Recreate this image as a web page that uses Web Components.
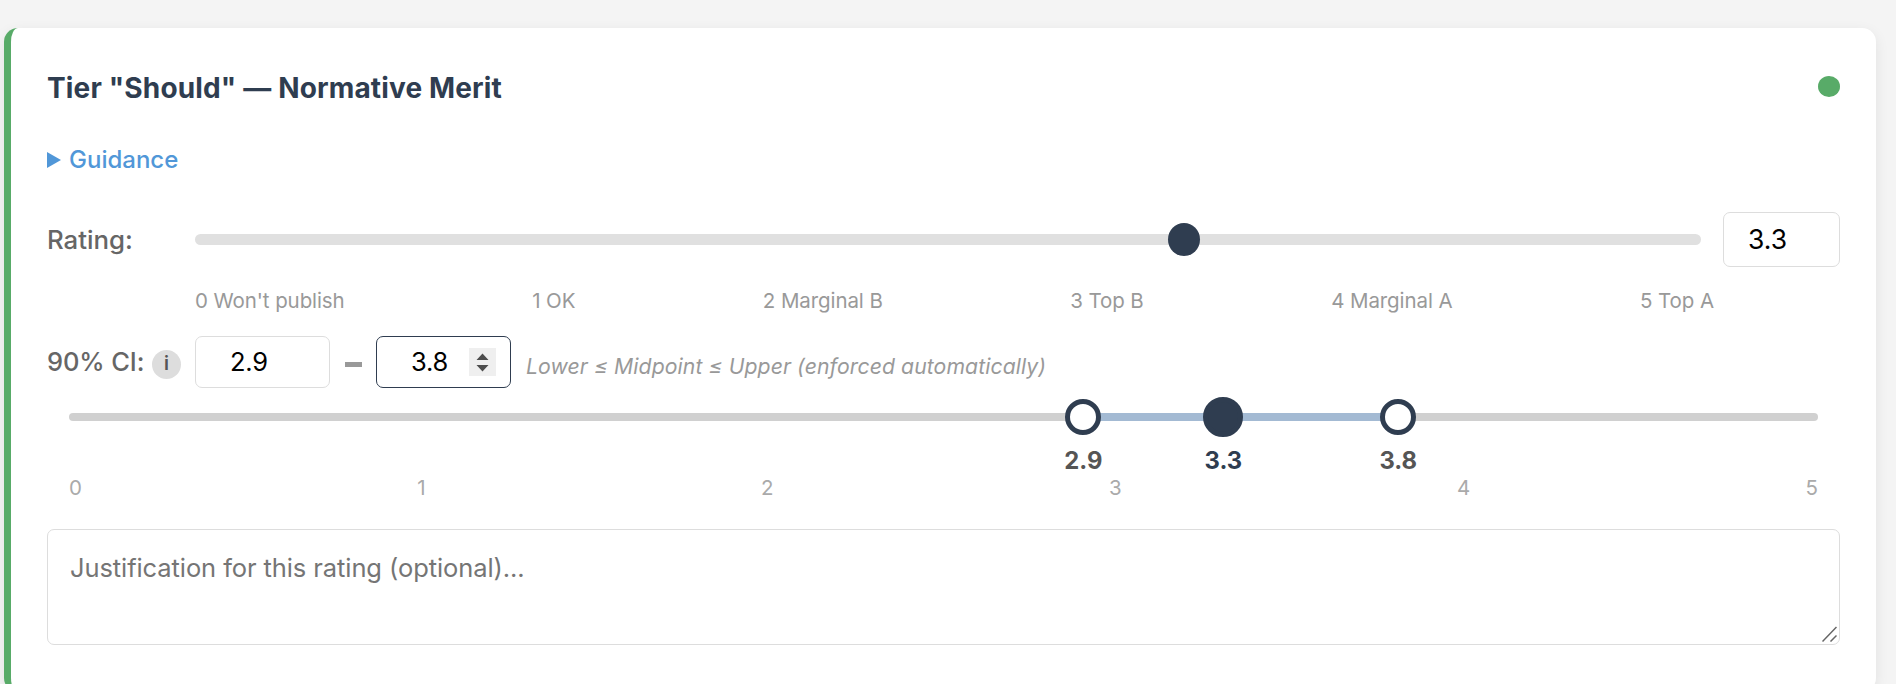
<!DOCTYPE html>
<html lang="en">
<head>
<meta charset="utf-8">
<title>Tier rating</title>
<style>
body {
  margin: 0;
  height: 684px;
  overflow: hidden;
  background: #f4f4f4;
  font-family: Inter, "Liberation Sans", sans-serif;
}
</style>
</head>
<body>

<rating-card heading='Tier "Should" — Normative Merit'>
  <guidance-toggle>Guidance</guidance-toggle>
  <rating-slider label="Rating:" value="3.3"></rating-slider>
  <scale-labels>
    <span>0 Won't publish</span>
    <span>1 OK</span>
    <span>2 Marginal B</span>
    <span>3 Top B</span>
    <span>4 Marginal A</span>
    <span>5 Top A</span>
  </scale-labels>
  <ci-row lower="2.9" upper="3.8">Lower ≤ Midpoint ≤ Upper (enforced automatically)</ci-row>
  <ci-range lower="2.9" mid="3.3" upper="3.8"></ci-range>
  <note-box>Justification for this rating (optional)...</note-box>
</rating-card>

<script>
class RatingCard extends HTMLElement {
  constructor() {
    super();
    this.attachShadow({ mode: "open" });
    this.shadowRoot.innerHTML = `
<style>
:host {
  display: block;
  box-sizing: border-box;
  margin: 28px 20px 0 4px;
  padding: 44px 36px 47px;
  border-left: 7px solid #58ab68;
  border-radius: 14px;
  background: #fff;
  box-shadow: 0 4px 14px rgba(0, 0, 0, 0.08);
}
header {
  display: flex;
  justify-content: space-between;
  height: 32px;
  margin-bottom: 41px;
}
h3 {
  margin: 0;
  font-size: 28px;
  line-height: 32px;
  font-weight: 700;
  letter-spacing: 0.15px;
  color: #2f3d50;
  white-space: nowrap;
}
.dot {
  width: 22px;
  height: 21px;
  margin-top: 4px;
  border-radius: 50%;
  background: #58ab68;
}
</style>
<header><h3></h3><span class="dot"></span></header>
<slot></slot>
`;
    this.shadowRoot.querySelector("h3").textContent = this.getAttribute("heading");
  }
}

class GuidanceToggle extends HTMLElement {
  constructor() {
    super();
    this.attachShadow({ mode: "open" });
    this.shadowRoot.innerHTML = `
<style>
:host {
  display: flex;
  align-items: center;
  gap: 8px;
  height: 28px;
  margin-bottom: 39px;
  font-size: 24px;
  line-height: 28px;
  font-weight: 500;
  color: #5197d8;
  cursor: pointer;
}
svg { display: block; margin-top: 2px; }
span { margin-top: 1px; }
</style>
<svg width="14" height="16" viewBox="0 0 14 16"><path d="M0 0L14 8L0 16Z" fill="#5197d8"/></svg>
<span><slot></slot></span>
`;
  }
}

class RatingSlider extends HTMLElement {
  constructor() {
    super();
    this.attachShadow({ mode: "open" });
    this.shadowRoot.innerHTML = `
<style>
:host {
  display: flex;
  align-items: center;
  height: 55px;
  margin-bottom: 20px;
}
.label {
  width: 148px;
  font-size: 25.8px;
  line-height: 30px;
  font-weight: 500;
  color: #666;
}
.track {
  position: relative;
  flex: 1;
  height: 11px;
  margin-right: 22px;
  border-radius: 6px;
  background: #e0e0e0;
}
.thumb {
  position: absolute;
  top: -11px;
  width: 32px;
  height: 33px;
  border-radius: 50%;
  background: #2f3d50;
}
.number {
  box-sizing: border-box;
  width: 117px;
  height: 55px;
  padding-left: 24px;
  border: 1px solid #ddd;
  border-radius: 7px;
  font-size: 26.5px;
  line-height: 53px;
  color: #000;
}
</style>
<span class="label"></span>
<div class="track"><span class="thumb"></span></div>
<div class="number"></div>
`;
    const value = this.getAttribute("value");
    this.shadowRoot.querySelector(".label").textContent = this.getAttribute("label");
    this.shadowRoot.querySelector(".number").textContent = value;
    // the thumb stays inside the track at both ends
    this.shadowRoot.querySelector(".thumb").style.left = `calc((100% - 32px) * ${value / 5})`;
  }
}

class ScaleLabels extends HTMLElement {
  constructor() {
    super();
    this.attachShadow({ mode: "open" });
    this.shadowRoot.innerHTML = `
<style>
:host {
  display: flex;
  justify-content: space-between;
  height: 28px;
  margin: 0 126px 21px 148px;
  font-size: 20.5px;
  line-height: 28px;
  letter-spacing: -0.09px;
  color: #999;
  white-space: nowrap;
}
</style>
<slot></slot>
`;
  }
}

class CiRow extends HTMLElement {
  constructor() {
    super();
    this.attachShadow({ mode: "open" });
    this.shadowRoot.innerHTML = `
<style>
:host {
  display: flex;
  align-items: center;
  height: 52px;
  margin-bottom: 9px;
  white-space: nowrap;
}
.label {
  display: flex;
  align-items: center;
  justify-content: space-between;
  width: 134px;
  margin-right: 14px;
  font-size: 25.5px;
  line-height: 30px;
  font-weight: 500;
  letter-spacing: -0.1px;
  color: #666;
}
.info {
  width: 29px;
  height: 29px;
  margin-top: 5px;
  border-radius: 50%;
  background: #ddd;
  font-size: 19px;
  line-height: 27px;
  font-weight: 600;
  text-align: center;
  color: #555;
}
.number {
  box-sizing: border-box;
  display: flex;
  align-items: center;
  justify-content: space-between;
  width: 135px;
  height: 52px;
  padding: 0 14px 0 34px;
  border: 1px solid #ddd;
  border-radius: 7px;
  font-size: 25.5px;
  line-height: 50px;
  letter-spacing: -0.2px;
  color: #000;
}
.number.focused { border-color: #2f3d50; }
.dash {
  width: 17px;
  margin: 5px 14px 0 15px;
  height: 5px;
  background: #999;
}
.hint {
  margin: 7px 0 0 15px;
  font-size: 21.2px;
  line-height: 28px;
  font-style: italic;
  letter-spacing: 0.09px;
  color: #999;
}
</style>
<div class="label"><span>90% CI:</span><span class="info">i</span></div>
<div class="number"><span id="lower"></span></div>
<span class="dash"></span>
<div class="number focused"><span id="upper"></span>
  <svg width="27" height="28" viewBox="0 0 27 28">
    <rect width="27" height="28" fill="#efefef"/>
    <path d="M7.5 12L13.5 5.5L19.5 12ZM7.5 17L13.5 23.5L19.5 17Z" fill="#4d4d4d"/>
  </svg>
</div>
<span class="hint"><slot></slot></span>
`;
    this.shadowRoot.querySelector("#lower").textContent = this.getAttribute("lower");
    this.shadowRoot.querySelector("#upper").textContent = this.getAttribute("upper");
  }
}

class CiRange extends HTMLElement {
  constructor() {
    super();
    this.attachShadow({ mode: "open" });
    this.shadowRoot.innerHTML = `
<style>
:host {
  display: block;
  margin: 0 22px 28px;
}
.range {
  position: relative;
  height: 40px;
  padding: 16px 0;
  margin-bottom: 37px;
  box-sizing: border-box;
}
.track {
  height: 8px;
  border-radius: 4px;
  background: #d0d0d0;
}
.fill {
  position: absolute;
  top: 16px;
  height: 8px;
  background: #a3bad3;
}
.handle {
  position: absolute;
  top: 20px;
  box-sizing: border-box;
  width: 36px;
  height: 36px;
  border: 5px solid #2f3d50;
  border-radius: 50%;
  background: #fff;
  transform: translate(-50%, -50%);
}
.handle.mid {
  width: 40px;
  height: 40px;
  background: #2f3d50;
}
.value {
  position: absolute;
  top: 50px;
  transform: translateX(-50%);
  font-size: 23.8px;
  line-height: 28px;
  font-weight: 700;
  color: #555;
}
.value.mid { color: #2f3d50; }
.ticks {
  display: flex;
  justify-content: space-between;
  font-size: 20.5px;
  line-height: 27px;
  color: #aaa;
}
</style>
<div class="range"><div class="track"></div><div class="fill"></div></div>
<div class="ticks"><span>0</span><span>1</span><span>2</span><span>3</span><span>4</span><span>5</span></div>
`;
    const range = this.shadowRoot.querySelector(".range");
    const fill = this.shadowRoot.querySelector(".fill");
    fill.style.left = this.getAttribute("lower") * 20 + "%";
    fill.style.right = 100 - this.getAttribute("upper") * 20 + "%";

    ["lower", "mid", "upper"].forEach((name) => {
      const value = this.getAttribute(name);
      const handle = document.createElement("span");
      handle.className = "handle " + name;
      handle.style.left = value * 20 + "%";
      const text = document.createElement("span");
      text.className = "value " + name;
      text.style.left = value * 20 + "%";
      text.textContent = value;
      range.append(handle, text);
    });
  }
}

class NoteBox extends HTMLElement {
  constructor() {
    super();
    this.attachShadow({ mode: "open" });
    this.shadowRoot.innerHTML = `
<style>
:host {
  display: flex;
  justify-content: space-between;
  box-sizing: border-box;
  height: 116px;
  padding: 22px 2px 2px 22px;
  border: 1px solid #ddd;
  border-radius: 7px;
  font-size: 25.5px;
  line-height: 32px;
  letter-spacing: -0.09px;
  color: #757575;
}
svg { align-self: flex-end; }
</style>
<span><slot></slot></span>
<svg width="15" height="16" viewBox="0 0 15 16"><path d="M0.5 15.5L14.5 1M8.5 15.5L14.5 9.5" stroke="#666" stroke-width="1.5" fill="none"/></svg>
`;
  }
}

customElements.define("rating-card", RatingCard);
customElements.define("guidance-toggle", GuidanceToggle);
customElements.define("rating-slider", RatingSlider);
customElements.define("scale-labels", ScaleLabels);
customElements.define("ci-row", CiRow);
customElements.define("ci-range", CiRange);
customElements.define("note-box", NoteBox);
</script>
</body>
</html>
